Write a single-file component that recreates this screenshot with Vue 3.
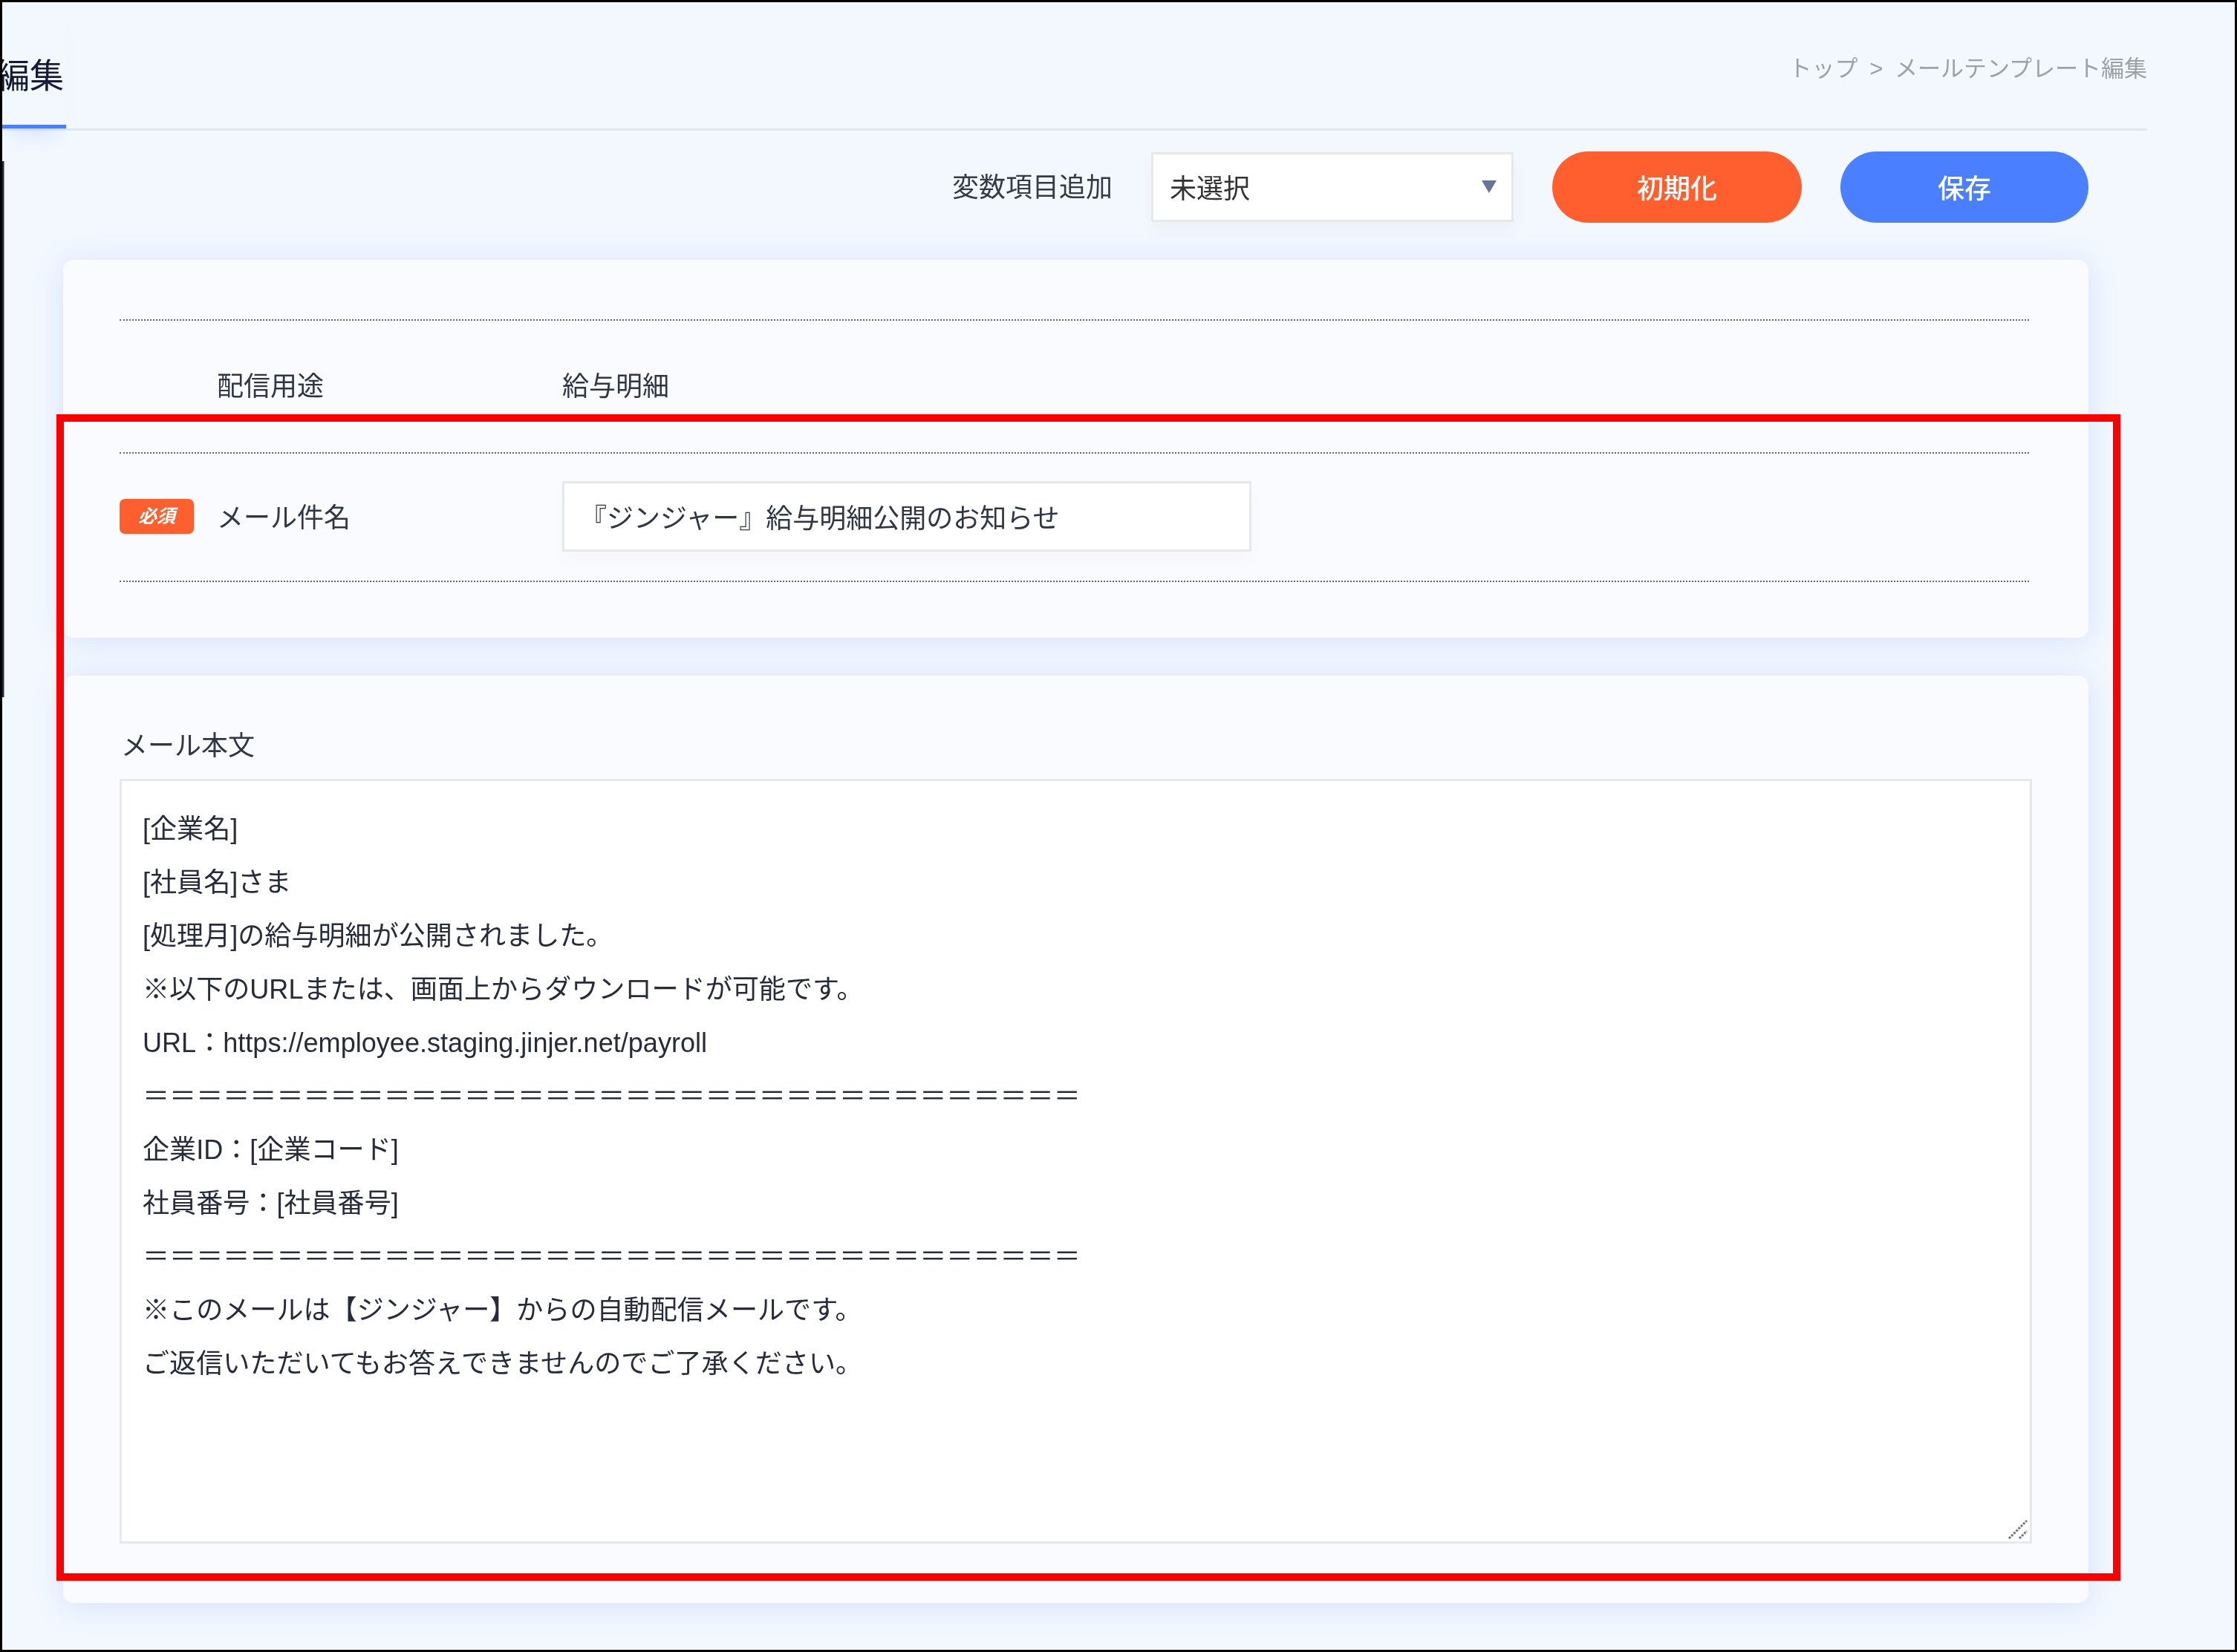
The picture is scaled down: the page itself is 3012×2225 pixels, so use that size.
<template>
  <div class="page">
    <div class="sidebar-edge"></div>

    <header class="page-header">
      <div class="title-tab">
        <h1 class="title">編集</h1>
      </div>
      <div class="breadcrumb">トップ &gt; メールテンプレート編集</div>
    </header>

    <div class="actions">
      <span class="actions-label">変数項目追加</span>
      <div class="select">
        <span class="select-value">未選択</span>
        <span class="select-arrow"></span>
      </div>
      <button class="btn btn--reset">初期化</button>
      <button class="btn btn--save">保存</button>
    </div>

    <section class="card card--meta">
      <div class="row row--usage">
        <div class="row-label">配信用途</div>
        <div class="row-value">給与明細</div>
      </div>
      <div class="row row--subject">
        <div class="row-label">
          <span class="badge">必須</span>
          <span class="subject-label">メール件名</span>
        </div>
        <div class="input">{{ subject }}</div>
      </div>
    </section>

    <section class="card card--body">
      <div class="body-label">メール本文</div>
      <div class="textarea">
        <div v-for="(line, i) in bodyLines" :key="i" class="textarea-line">{{ line }}</div>
        <svg class="resizer" width="28" height="28" viewBox="0 0 28 28">
          <path d="M2 26L26 2M16 26L26 16" stroke="#777" stroke-width="3" stroke-dasharray="3 1.5" fill="none" />
        </svg>
      </div>
    </section>

    <div class="highlight"></div>
  </div>
</template>

<script setup>
const subject = '『ジンジャー』給与明細公開のお知らせ'
const rule = '＝'.repeat(35)

const bodyLines = [
  '[企業名]',
  '[社員名]さま',
  '[処理月]の給与明細が公開されました。',
  '※以下のURLまたは、画面上からダウンロードが可能です。',
  'URL：https://employee.staging.jinjer.net/payroll',
  rule,
  '企業ID：[企業コード]',
  '社員番号：[社員番号]',
  rule,
  '※このメールは【ジンジャー】からの自動配信メールです。',
  'ご返信いただいてもお答えできませんのでご了承ください。'
]
</script>

<style>
html,
body {
  margin: 0;
  background: #f3f8ff;
}
</style>

<style scoped>
.page {
  position: relative;
  box-sizing: border-box;
  width: 3012px;
  height: 2225px;
  overflow: hidden;
  background: #f3f8ff;
  border: 3px solid #000;
  font-family: "Liberation Sans", "Noto Sans CJK JP", sans-serif;
  font-size: 36px;
  color: #2f3646;
}

.sidebar-edge {
  position: absolute;
  left: 0;
  top: 214px;
  width: 2px;
  height: 722px;
  background: #1c2a56;
  border-right: 1px solid #5f8fff;
}

.page-header,
.actions,
.card {
  filter: blur(0.7px);
}

.page-header {
  display: flex;
  justify-content: space-between;
  align-items: flex-start;
  box-sizing: border-box;
  width: 2888px;
  height: 173px;
  border-bottom: 3px solid #e1e6f1;
}

.title-tab {
  display: flex;
  justify-content: flex-end;
  box-sizing: border-box;
  width: 86px;
  height: 170px;
  padding-right: 3px;
  overflow: hidden;
  border-bottom: 5px solid #4a80ff;
  box-shadow: 0 22px 22px -12px rgba(74, 128, 255, 0.14);
}

.title {
  flex-shrink: 0;
  margin: 68px 0 0;
  font-size: 46px;
  font-weight: 400;
  line-height: 62px;
  color: #141c38;
}

.breadcrumb {
  margin-top: 70px;
  font-size: 31px;
  line-height: 40px;
  word-spacing: 7px;
  color: #9da1a9;
}

.actions {
  display: flex;
  justify-content: flex-end;
  align-items: center;
  gap: 52px;
  box-sizing: border-box;
  width: 2809px;
  height: 96px;
  margin-top: 28px;
}

.actions-label {
  margin-top: -6px;
  color: #353a44;
}

.select {
  display: flex;
  justify-content: space-between;
  align-items: center;
  box-sizing: border-box;
  width: 488px;
  height: 94px;
  padding: 0 20px 0 22px;
  background: #fff;
  border: 3px solid #e6e8ea;
  box-shadow: 0 14px 22px rgba(0, 0, 0, 0.03);
  color: #333;
}

.select-value {
  margin-top: -2px;
}

.select-arrow {
  width: 0;
  height: 0;
  margin-top: -2px;
  border-left: 10px solid transparent;
  border-right: 10px solid transparent;
  border-top: 17px solid #67749c;
}

.btn {
  height: 96px;
  padding: 0 0 3px;
  border: none;
  border-radius: 48px;
  font-family: inherit;
  font-size: 36px;
  font-weight: 500;
  color: #fff;
}

.btn--reset {
  width: 336px;
  background: #ff5f2f;
}

.btn--save {
  width: 334px;
  background: #4a80ff;
}

.card {
  box-sizing: border-box;
  width: 2727px;
  margin-left: 82px;
  background: #f9fbfe;
  border-radius: 14px;
  box-shadow: 0 4px 40px rgba(70, 120, 220, 0.17);
}

.card--meta {
  height: 509px;
  margin-top: 50px;
  padding: 80px 80px 0 76px;
}

.row {
  display: grid;
  grid-template-columns: 596px 1fr;
  align-items: center;
  box-sizing: border-box;
  border-top: 2px dotted #666;
}

.row--usage {
  height: 179px;
  padding-bottom: 8px;
}

.row--usage .row-label {
  padding-left: 131px;
}

.row--subject {
  height: 175px;
  padding-bottom: 2px;
  border-bottom: 2px dotted #666;
}

.row-label {
  display: flex;
  align-items: center;
  gap: 31px;
}

.subject-label {
  margin-top: -4px;
}

.badge {
  width: 100px;
  height: 47px;
  border-radius: 7px;
  background: #ff5f2f;
  font-size: 25px;
  font-style: italic;
  font-weight: 700;
  line-height: 47px;
  text-align: center;
  color: #fff;
}

.input {
  box-sizing: border-box;
  width: 928px;
  height: 95px;
  padding-left: 21px;
  background: #fff;
  border: 3px solid #e6e8ea;
  box-shadow: 0 14px 22px rgba(0, 0, 0, 0.02);
  line-height: 96px;
}

.card--body {
  height: 1249px;
  margin-top: 51px;
  padding: 73px 0 0 76px;
}

.body-label {
  height: 44px;
  margin: 0 0 22px 2px;
  line-height: 44px;
}

.textarea {
  position: relative;
  box-sizing: border-box;
  width: 2575px;
  height: 1030px;
  padding: 29px 0 0 28px;
  background: #fff;
  border: 3px solid #e6e8ea;
  font-size: 36.1px;
  color: #262c3c;
}

.textarea-line {
  height: 72px;
  line-height: 72px;
  white-space: pre;
}

.resizer {
  position: absolute;
  right: 2px;
  bottom: 2px;
}

.highlight {
  position: absolute;
  left: 73px;
  top: 555px;
  box-sizing: border-box;
  width: 2779px;
  height: 1571px;
  border: 10px solid #f00;
  pointer-events: none;
}
</style>
